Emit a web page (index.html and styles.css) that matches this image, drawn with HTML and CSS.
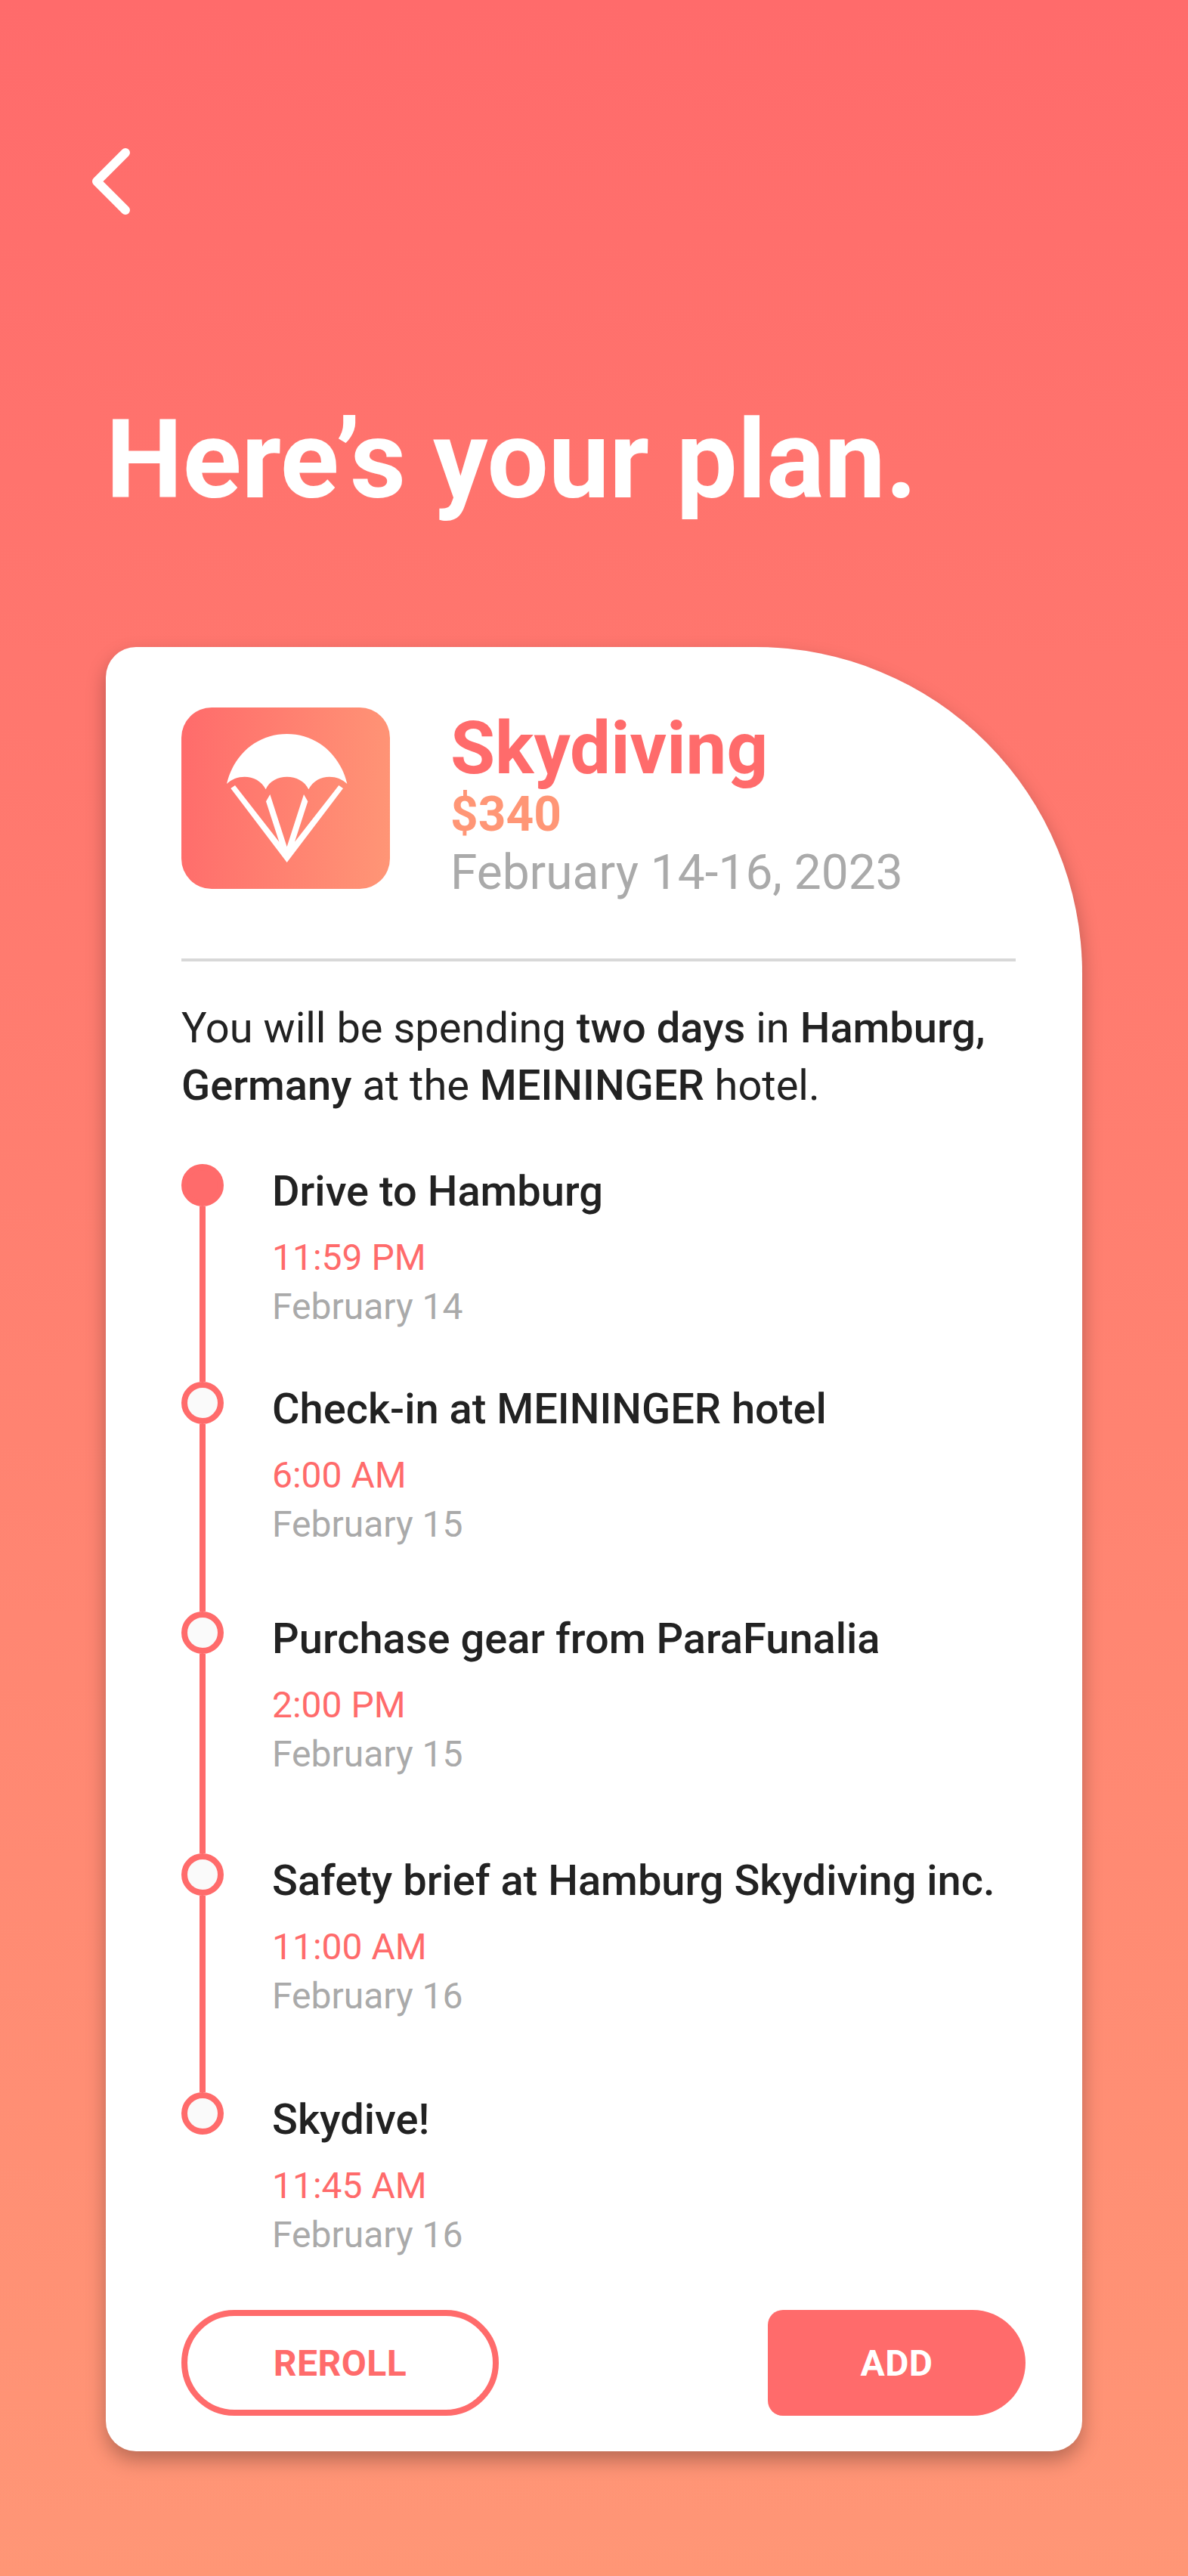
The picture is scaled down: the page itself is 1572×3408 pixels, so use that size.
FILE: index.html
```html
<!DOCTYPE html>
<html lang="en">
<head>
<meta charset="utf-8">
<title>Here's your plan</title>
<link rel="stylesheet" href="styles.css">
</head>
<body>
<main class="screen">
  <button class="back" aria-label="Back">
    <svg class="back-icon" viewBox="0 0 50 88"><path d="M44 6 L6 44 L44 82"/></svg>
  </button>
  <h1 class="headline">Here’s your plan.</h1>
  <section class="card">
    <header class="trip">
      <div class="tile">
        <svg class="chute" viewBox="120 107 828 720">
          <path d="M300 410 C328 290 425 212 539 212 C653 212 750 290 778 410 C735 368 655 372 625 432 C595 366 483 366 455 432 C425 372 343 368 300 410 Z"/>
          <path d="M316 428 L333 416 L508 640 L456 480 L472 452 L539 660 L606 452 L622 480 L570 640 L745 416 L762 428 L539 722 Z"/>
        </svg>
      </div>
      <div class="trip-text">
        <div class="trip-name">Skydiving</div>
        <div class="trip-price">$340</div>
        <div class="trip-dates">February 14-16, 2023</div>
      </div>
    </header>
    <hr class="rule">
    <p class="summary">You will be spending <b>two days</b> in <b>Hamburg, Germany</b> at the <b>MEININGER</b> hotel.</p>
    <ol class="timeline">
      <li class="stop stop-a">
        <div class="rail"><span class="dot dot-solid"></span><span class="line"></span></div>
        <div class="stop-text"><div class="stop-title">Drive to Hamburg</div><div class="stop-time">11:59 PM</div><div class="stop-date">February 14</div></div>
      </li>
      <li class="stop stop-b">
        <div class="rail"><span class="dot"></span><span class="line"></span></div>
        <div class="stop-text"><div class="stop-title">Check-in at MEININGER hotel</div><div class="stop-time">6:00 AM</div><div class="stop-date">February 15</div></div>
      </li>
      <li class="stop stop-c">
        <div class="rail"><span class="dot"></span><span class="line"></span></div>
        <div class="stop-text"><div class="stop-title">Purchase gear from ParaFunalia</div><div class="stop-time">2:00 PM</div><div class="stop-date">February 15</div></div>
      </li>
      <li class="stop stop-d">
        <div class="rail"><span class="dot"></span><span class="line"></span></div>
        <div class="stop-text"><div class="stop-title">Safety brief at Hamburg Skydiving inc.</div><div class="stop-time">11:00 AM</div><div class="stop-date">February 16</div></div>
      </li>
      <li class="stop stop-e">
        <div class="rail"><span class="dot"></span></div>
        <div class="stop-text"><div class="stop-title">Skydive!</div><div class="stop-time">11:45 AM</div><div class="stop-date">February 16</div></div>
      </li>
    </ol>
    <div class="actions">
      <button class="btn btn-reroll">REROLL</button>
      <button class="btn btn-add">ADD</button>
    </div>
  </section>
</main>
</body>
</html>
```
FILE: styles.css
```css
* { box-sizing: border-box; }
html, body { margin: 0; padding: 0; }
body {
  width: 1572px;
  height: 3408px;
  overflow: hidden;
  font-family: Roboto, "Liberation Sans", sans-serif;
}
.screen {
  height: 3408px;
  padding: 196px 140px 0;
  background: linear-gradient(180deg, #ff6b6b 0%, #ff9676 100%);
}
.back {
  display: block;
  width: 50px;
  height: 88px;
  margin: 0 0 0 -18px;
  padding: 0;
  border: 0;
  background: none;
}
.back-icon {
  display: block;
  width: 50px;
  height: 88px;
  fill: none;
  stroke: #fff;
  stroke-width: 12;
  stroke-linecap: round;
  stroke-linejoin: round;
}
.headline {
  margin: 241px 0 163px;
  font-size: 144px;
  line-height: 168px;
  font-weight: 700;
  color: #fff;
  white-space: nowrap;
}
.card {
  width: 1292px;
  height: 2387px;
  padding: 80px 75px 47px 100px;
  background: #fff;
  border-radius: 40px 432px 40px 40px;
  box-shadow: 0 12px 26px rgba(0, 0, 0, 0.28);
}
.trip {
  display: flex;
  gap: 80px;
  height: 240px;
}
.tile {
  width: 276px;
  height: 240px;
  flex: none;
  border-radius: 40px;
  background: linear-gradient(95deg, #ff6b6b 0%, #ff9676 100%);
}
.chute { display: block; width: 276px; height: 240px; fill: #fff; }
.trip-text { display: flex; flex-direction: column; white-space: nowrap; }
.trip-name { font-size: 96px; line-height: 100px; font-weight: 700; color: #ff6b6b; margin-top: 4px; }
.trip-price { font-size: 64px; line-height: 66px; font-weight: 700; color: #ff9676; margin-top: 5px; }
.trip-dates { font-size: 64px; line-height: 76px; font-weight: 400; color: #aaa; margin-top: 6px; }
.rule {
  height: 4px;
  margin: 92px 13px 0 0;
  border: 0;
  background: #d8d8d8;
}
.summary {
  margin: 50px 13px 66px 0;
  font-size: 56px;
  line-height: 76px;
  font-weight: 400;
  color: #222;
}
.summary b { font-weight: 500; }
.timeline { margin: 0; padding: 0; list-style: none; }
.stop { display: flex; gap: 64px; }
.stop-a { height: 288px; }
.stop-b { height: 304px; }
.stop-c { height: 320px; }
.stop-d { height: 316px; }
.stop-e { height: 288px; }
.rail {
  width: 56px;
  flex: none;
  display: flex;
  flex-direction: column;
  align-items: center;
}
.dot {
  width: 56px;
  height: 56px;
  flex: none;
  border: 8px solid #ff6b6b;
  border-radius: 50%;
  background: #fafafa;
}
.dot-solid { background: #ff6b6b; }
.line { width: 8px; flex: 1; background: #ff6b6b; }
.stop-text { padding-top: 6px; white-space: nowrap; }
.stop-title { font-size: 56px; line-height: 60px; font-weight: 500; color: #222; }
.stop-time { margin-top: 25px; font-size: 48px; line-height: 65px; color: #ff6b6b; }
.stop-date { font-size: 48px; line-height: 65px; color: #aaa; }
.actions { display: flex; justify-content: space-between; }
.btn {
  height: 140px;
  padding: 0;
  font-family: inherit;
  font-size: 48px;
  font-weight: 700;
  letter-spacing: 0.5px;
}
.btn-reroll {
  width: 420px;
  border: 8px solid #ff6b6b;
  border-radius: 70px;
  background: #fff;
  color: #ff6b6b;
}
.btn-add {
  width: 341px;
  border: 0;
  border-radius: 20px 70px 70px 20px;
  background: #ff6b6b;
  color: #fff;
}
```
